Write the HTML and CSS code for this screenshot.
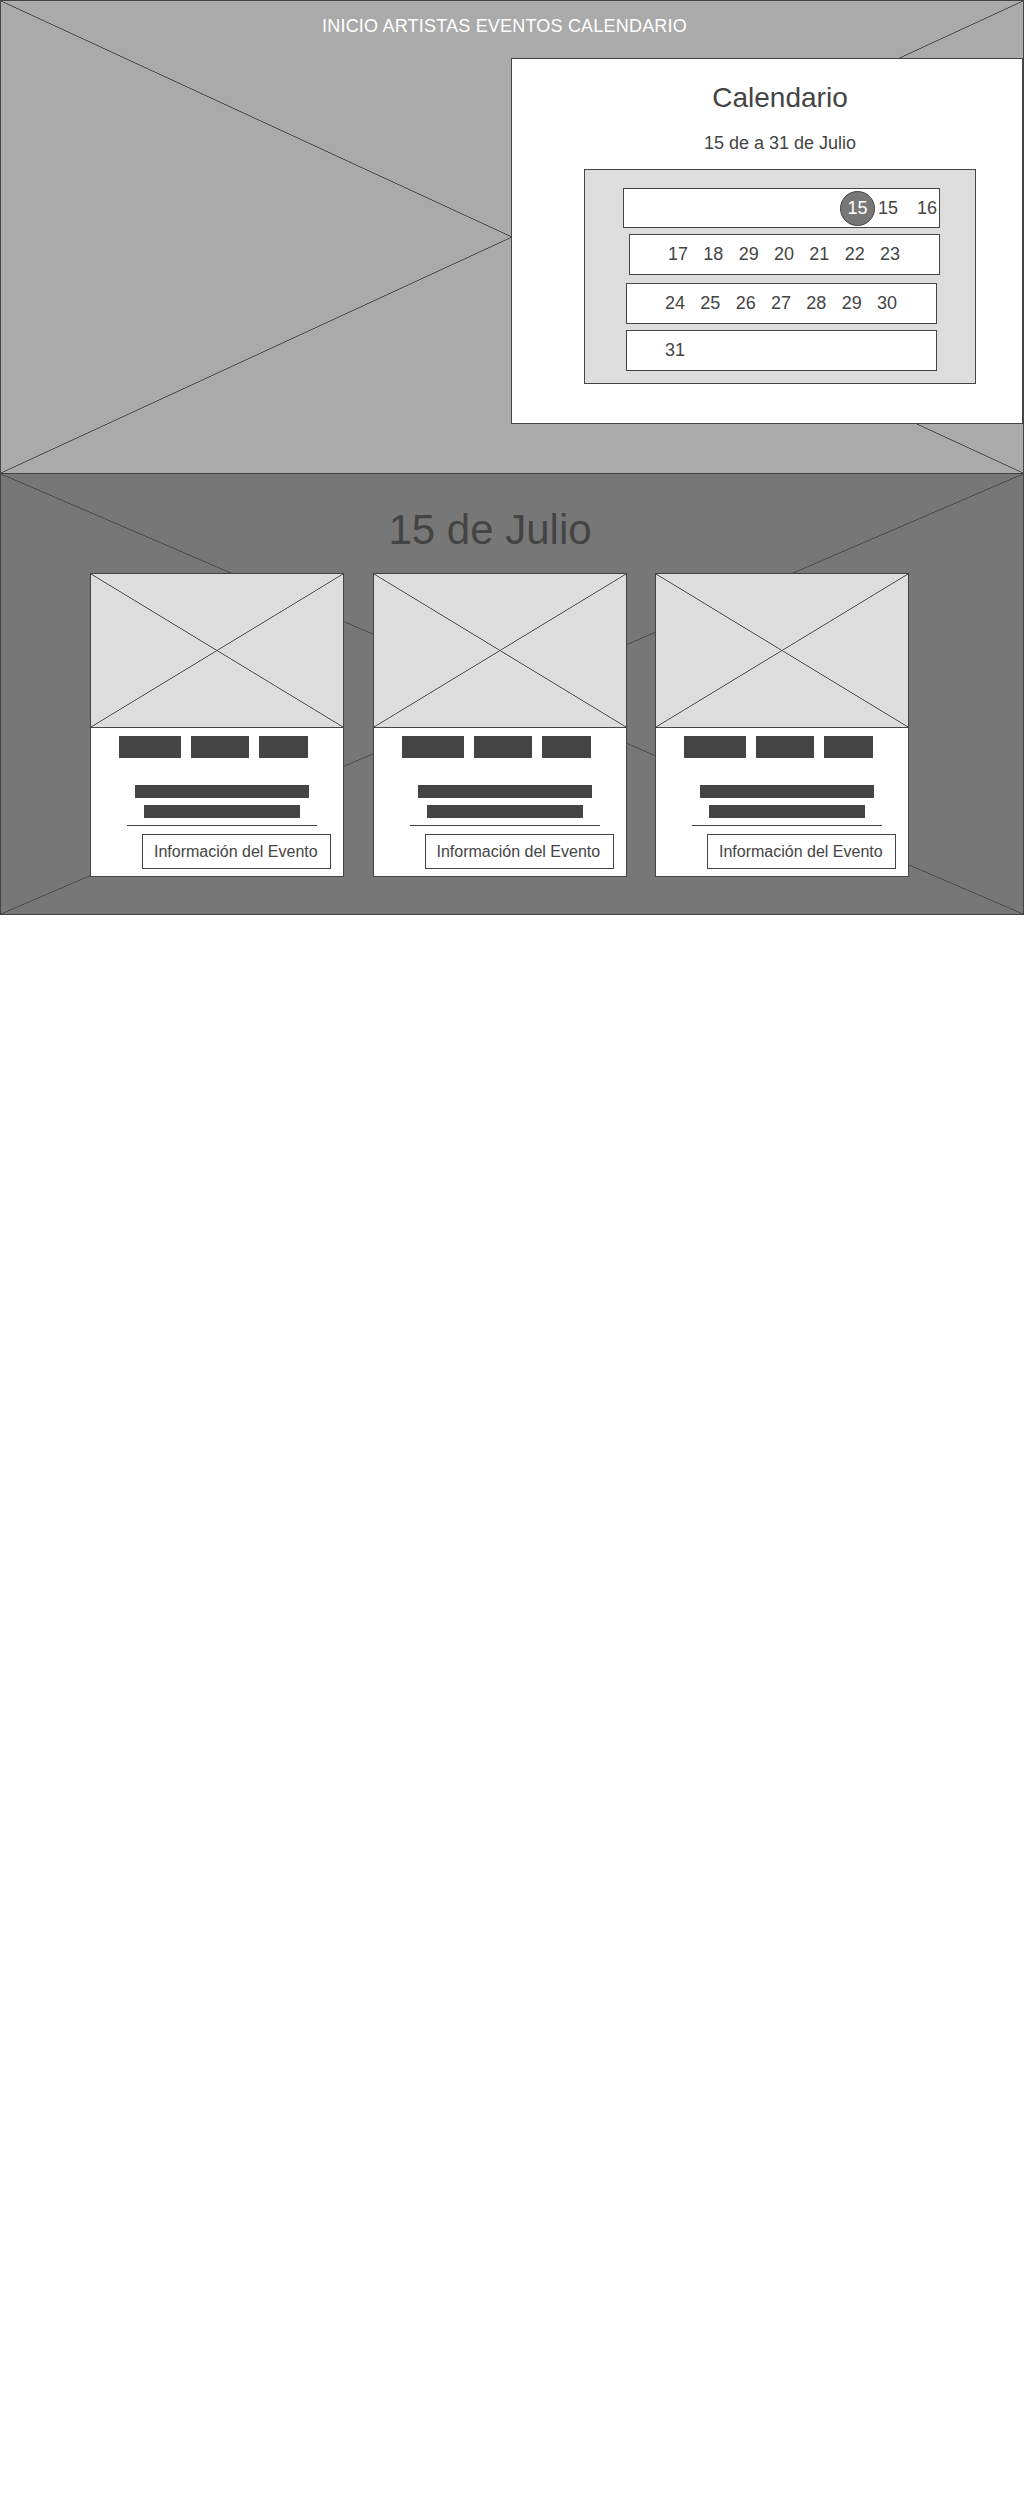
FILE: index.html
```html
<!DOCTYPE html>
<html lang="es">
<head>
<meta charset="utf-8">
<title>Calendario</title>
<link rel="stylesheet" href="styles.css">
</head>
<body>
<header class="hero">
  <nav class="nav"><a>INICIO</a> <a>ARTISTAS</a> <a>EVENTOS</a> <a>CALENDARIO</a></nav>
  <section class="cal-panel">
    <h2 class="cal-title">Calendario</h2>
    <p class="cal-range">15 de a 31 de Julio</p>
    <div class="cal-box">
      <div class="cal-row row-first">
        <span class="today">15</span><span class="day">15</span><span class="day day-last">16</span>
      </div>
      <div class="cal-row row-2">
        <span class="day">17</span><span class="day">18</span><span class="day">29</span><span class="day">20</span><span class="day">21</span><span class="day">22</span><span class="day">23</span>
      </div>
      <div class="cal-row row-3">
        <span class="day">24</span><span class="day">25</span><span class="day">26</span><span class="day">27</span><span class="day">28</span><span class="day">29</span><span class="day">30</span>
      </div>
      <div class="cal-row row-4">
        <span class="day">31</span>
      </div>
    </div>
  </section>
</header>
<main class="events">
  <h1 class="events-title">15 de Julio</h1>
  <div class="cards">
    <article class="card">
      <div class="card-img"></div>
      <div class="card-body">
        <div class="tags"><span class="tag t1"></span><span class="tag t2"></span><span class="tag t3"></span></div>
        <div class="line line-a"></div>
        <div class="line line-b"></div>
        <div class="rule"></div>
        <a class="event-btn">Información del Evento</a>
      </div>
    </article>
    <article class="card">
      <div class="card-img"></div>
      <div class="card-body">
        <div class="tags"><span class="tag t1"></span><span class="tag t2"></span><span class="tag t3"></span></div>
        <div class="line line-a"></div>
        <div class="line line-b"></div>
        <div class="rule"></div>
        <a class="event-btn">Información del Evento</a>
      </div>
    </article>
    <article class="card">
      <div class="card-img"></div>
      <div class="card-body">
        <div class="tags"><span class="tag t1"></span><span class="tag t2"></span><span class="tag t3"></span></div>
        <div class="line line-a"></div>
        <div class="line line-b"></div>
        <div class="rule"></div>
        <a class="event-btn">Información del Evento</a>
      </div>
    </article>
  </div>
</main>
</body>
</html>
```
FILE: styles.css
```css
* { box-sizing: border-box; }

body {
  margin: 0;
  background: #fff;
  font-family: "Liberation Sans", Arial, sans-serif;
  color: #444;
}

.hero {
  width: 1024px;
  height: 474px;
  border: 1px solid #444;
  background-color: #aaa;
  background-image:
    linear-gradient(to top right, transparent calc(50% - 0.7px), #4a4a4a calc(50% - 0.2px), #4a4a4a calc(50% + 0.2px), transparent calc(50% + 0.7px)),
    linear-gradient(to bottom right, transparent calc(50% - 0.7px), #4a4a4a calc(50% - 0.2px), #4a4a4a calc(50% + 0.2px), transparent calc(50% + 0.7px));
  display: flex;
  flex-direction: column;
}

.nav {
  height: 57px;
  padding: 15px 15px 0 0;
  text-align: center;
  font-size: 18px;
  line-height: 21px;
  letter-spacing: 0.2px;
  color: #fff;
}
.nav a { color: #fff; text-decoration: none; }

.cal-panel {
  align-self: flex-end;
  width: 512px;
  height: 366px;
  background: #fff;
  border: 1px solid #444;
  padding: 23px 0 0 26px;
}

.cal-title {
  margin: 0;
  font-size: 28px;
  line-height: 32px;
  font-weight: normal;
  text-align: center;
  color: #444;
}

.cal-range {
  margin: 19px 0 0;
  font-size: 18px;
  line-height: 21px;
  text-align: center;
}

.cal-box {
  width: 392px;
  height: 215px;
  margin: 15px auto 0;
  background: #ddd;
  border: 1px solid #444;
  padding-top: 18px;
}

.cal-row {
  display: flex;
  align-items: center;
  width: 311px;
  height: 41px;
  background: #fff;
  border: 1px solid #444;
  padding-left: 38px;
  gap: 15.3px;
  font-size: 18px;
  line-height: 21px;
}

.row-first {
  width: 317px;
  height: 40px;
  margin-left: 38px;
  justify-content: flex-end;
  padding: 0 2px 0 0;
  gap: 0;
}
.row-2 { margin: 6px 0 0 44px; }
.row-3 { margin: 8px 0 0 41px; }
.row-4 { margin: 6px 0 0 41px; }

.today {
  width: 35px;
  height: 35px;
  border-radius: 50%;
  background: #777;
  border: 1px solid #444;
  color: #fff;
  display: flex;
  align-items: center;
  justify-content: center;
  margin-right: 3px;
}
.day-last { margin-left: 19px; }

.events {
  margin-top: -1px;
  width: 1024px;
  height: 442px;
  border: 1px solid #444;
  background-color: #777;
  background-image:
    linear-gradient(to top right, transparent calc(50% - 0.7px), #4a4a4a calc(50% - 0.2px), #4a4a4a calc(50% + 0.2px), transparent calc(50% + 0.7px)),
    linear-gradient(to bottom right, transparent calc(50% - 0.7px), #4a4a4a calc(50% - 0.2px), #4a4a4a calc(50% + 0.2px), transparent calc(50% + 0.7px));
  padding-top: 32px;
}

.events-title {
  margin: 0;
  padding-right: 44px;
  font-size: 42px;
  line-height: 48px;
  font-weight: normal;
  text-align: center;
  color: #444;
}

.cards {
  display: flex;
  gap: 28.5px;
  margin-top: 19px;
  padding-left: 89px;
}

.card {
  width: 254px;
  height: 304px;
  background: #fff;
  border: 1px solid #444;
}

.card-img {
  height: 154px;
  border-bottom: 1px solid #444;
  background-color: #ddd;
  background-image:
    linear-gradient(to top right, transparent calc(50% - 0.7px), #555 calc(50% - 0.2px), #555 calc(50% + 0.2px), transparent calc(50% + 0.7px)),
    linear-gradient(to bottom right, transparent calc(50% - 0.7px), #555 calc(50% - 0.2px), #555 calc(50% + 0.2px), transparent calc(50% + 0.7px));
}

.card-body {
  padding-top: 8px;
}

.tags {
  display: flex;
  gap: 10px;
  margin-left: 28px;
}
.tag { height: 22px; background: #444; }
.t1 { width: 62px; }
.t2 { width: 58px; }
.t3 { width: 49px; }

.line { height: 13px; background: #444; }
.line-a { width: 174px; margin: 27px 0 0 44px; }
.line-b { width: 156px; margin: 7px 0 0 53px; }

.rule {
  width: 190px;
  height: 1px;
  background: #444;
  margin: 7px 0 0 36px;
}

.event-btn {
  display: block;
  width: 189px;
  height: 35px;
  margin: 8px 0 0 51px;
  border: 1px solid #444;
  background: #fff;
  padding-left: 11px;
  font-size: 16px;
  line-height: 33px;
  color: #444;
  text-decoration: none;
  white-space: nowrap;
}
```
